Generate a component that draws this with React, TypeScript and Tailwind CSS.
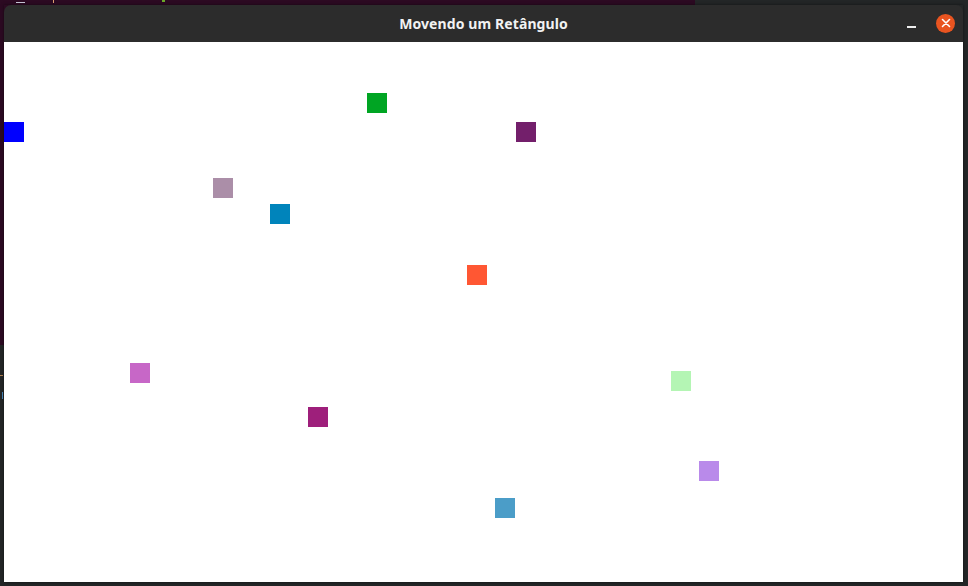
const squares = [
  { x: 0, y: 80, color: "#0000ff" },
  { x: 363, y: 51, color: "#00a523" },
  { x: 512, y: 80, color: "#731f6b" },
  { x: 209, y: 136, color: "#ab8ea8" },
  { x: 266, y: 162, color: "#0084bb" },
  { x: 463, y: 223, color: "#ff5733" },
  { x: 126, y: 321, color: "#c767c7" },
  { x: 667, y: 329, color: "#b4f5b4" },
  { x: 304, y: 365, color: "#9e1f7b" },
  { x: 695, y: 419, color: "#b98aea" },
  { x: 491, y: 456, color: "#4b9dc8" },
];

export default function App() {
  return (
    <div className="relative w-[968px] h-[586px] overflow-hidden bg-[#232627] pt-[5px] pl-[4px]">
      {/* desktop behind: terminal window */}
      <div className="absolute left-0 top-0 w-[695px] h-[345px] bg-[#2c0a22]">
        <span className="absolute left-[16px] top-[2px] w-[9px] h-px bg-[#c8c8d8]" />
        <span className="absolute left-[53px] top-0 w-px h-[3px] bg-[#e0a070]" />
        <span className="absolute left-[162px] top-0 w-[3px] h-[2px] bg-[#6aa82a]" />
      </div>
      <div className="absolute left-0 top-[375px] w-[3px] h-px bg-[#b08050]" />
      <div className="absolute left-[2px] top-[392px] w-px h-[7px] bg-[#4b8ac0]" />

      <div className="relative flex flex-col w-[959px] h-[577px] shadow-[0_0_3px_rgba(0,0,0,0.5)]">
        <div className="relative flex items-center justify-center h-[37px] bg-[#2c2c2c] rounded-t-[7px]">
          <span className="text-[14px] font-bold text-[#f2f2f2] font-['Noto_Sans',sans-serif] tracking-[0.1px]">
            Movendo um Retângulo
          </span>
          <div className="absolute right-[8px] top-0 h-full flex items-center gap-[20px]">
            <span className="w-[9px] h-[2px] bg-[#eeeeee] mt-[6px]" />
            <span className="flex items-center justify-center w-[19px] h-[19px] rounded-full bg-[#e95420] mb-[1px]">
              <svg width="10" height="10" viewBox="0 0 10 10">
                <path d="M1.5 1.5 L8.5 8.5 M8.5 1.5 L1.5 8.5" stroke="#ffffff" strokeWidth="1.6" strokeLinecap="round" />
              </svg>
            </span>
          </div>
        </div>
        <div className="relative flex-1 bg-white">
          {squares.map((s, i) => (
            <div
              key={i}
              className="absolute w-[20px] h-[20px]"
              style={{ left: s.x, top: s.y, backgroundColor: s.color }}
            />
          ))}
        </div>
      </div>
    </div>
  );
}
